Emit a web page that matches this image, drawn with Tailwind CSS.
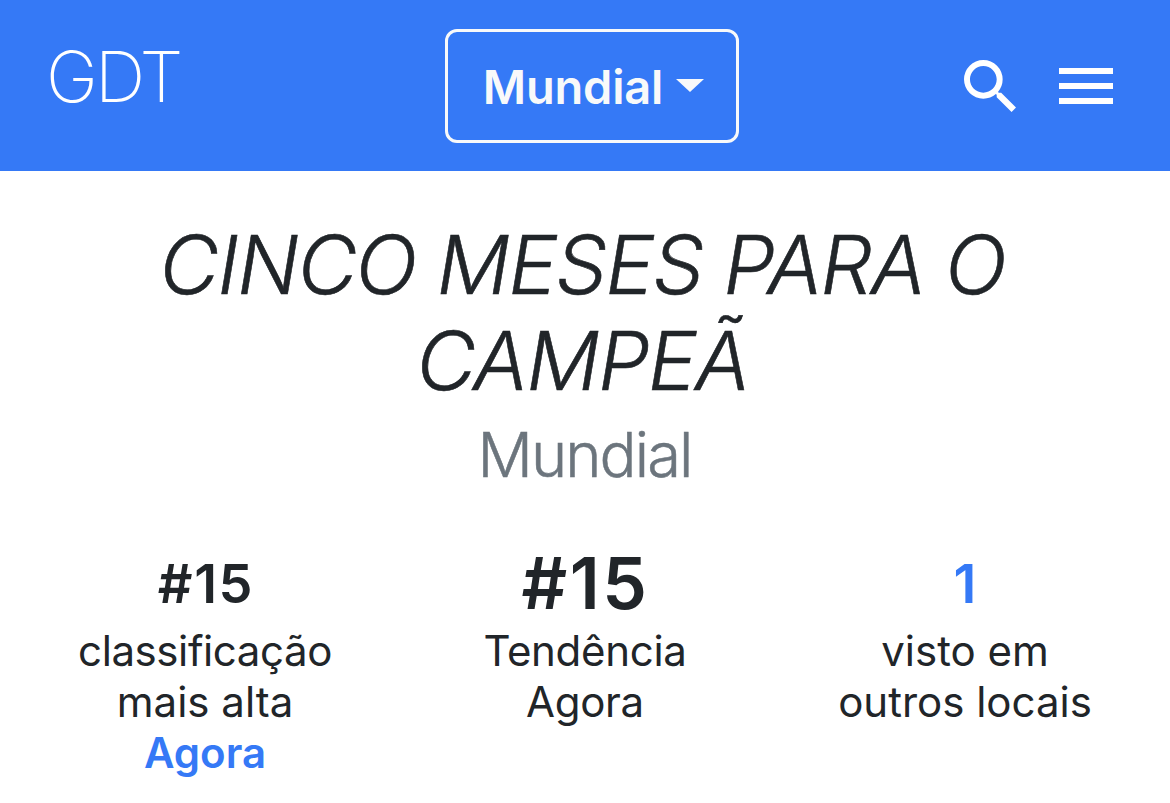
<!DOCTYPE html>
<html lang="pt">
<head>
    <meta charset="UTF-8">
    <meta name="viewport" content="width=device-width, initial-scale=1.0">
    <title>GDT - Mundial</title>
    <script src="https://cdn.jsdelivr.net/npm/@tailwindcss/browser@4"></script>
</head>
<body class="bg-white text-[#212529] font-[Inter,sans-serif] h-[803px] overflow-hidden">

    <!-- Navbar -->
    <nav class="grid grid-cols-[445px_294px_1fr] items-center h-[171px] bg-[#3579f6] text-white">
        <a href="#" class="pl-[46px] pb-[17px] text-[70px] leading-none font-extralight tracking-[-2.9px]">GDT</a>
        <button class="flex items-center justify-center gap-[13px] pl-[3px] h-[114px] border-3 border-[#f8f9fa] rounded-xl text-[47px] font-semibold tracking-[-0.2px] text-[#f8f9fa]">
            <span class="pt-[3px]">Mundial</span>
            <svg class="w-[28px] h-[13px]" viewBox="0 0 28 13" fill="currentColor"><path d="M0 0h28L14 13z"/></svg>
        </button>
        <div class="flex items-center justify-end gap-[43px] pr-[57px]">
            <svg class="w-[52px] h-[52px]" viewBox="3 3 17.49 17.49" fill="currentColor"><path d="M15.5 14h-.79l-.28-.27A6.471 6.471 0 0 0 16 9.5 6.5 6.5 0 1 0 9.5 16c1.61 0 3.09-.59 4.23-1.57l.27.28v.79l5 4.99L20.49 19l-4.99-5zm-6 0C7.01 14 5 11.99 5 9.5S7.01 5 9.5 5 14 7.01 14 9.5 11.99 14 9.5 14z"/></svg>
            <svg class="w-[54px] h-[36px]" viewBox="3 6 18 12" fill="currentColor"><path d="M3 18h18v-2H3v2zm0-5h18v-2H3v2zm0-7v2h18V6H3z"/></svg>
        </div>
    </nav>

    <!-- Trend title -->
    <header class="pt-[46px] text-center">
        <h1 class="pr-[5px] text-[81.5px] leading-[96px] font-light italic tracking-[-1.5px] [word-spacing:-0.5px] [-webkit-text-stroke:0.6px]">CINCO MESES PARA O<br>CAMPEÃ</h1>
        <h2 class="mt-2 pr-px text-[61.5px] leading-[76px] font-light tracking-[-1.9px] text-[#6c757d] [-webkit-text-stroke:0.5px]">Mundial</h2>
    </header>

    <!-- Stats -->
    <section class="grid grid-cols-3 pt-[54px] px-[15px] text-center text-[42px] leading-[51px]">
        <div>
            <div class="h-[78px] pt-px pl-[2px] text-[54px] leading-[72px] font-semibold tracking-[1.6px]">#15</div>
            <p><span class="tracking-[-0.4px]">classificação</span><br>mais alta<br><a href="#" class="font-semibold text-[#3579f6]">Agora</a></p>
        </div>
        <div>
            <div class="h-[78px] pl-px text-[71px] leading-[72px] font-semibold tracking-[2.5px]">#15</div>
            <p class="tracking-[-0.3px]">Tendência<br>Agora</p>
        </div>
        <div>
            <div class="h-[78px] pt-px text-[54px] leading-[72px] font-semibold text-[#3579f6]">1</div>
            <p>visto em<br>outros locais</p>
        </div>
    </section>

</body>
</html>
